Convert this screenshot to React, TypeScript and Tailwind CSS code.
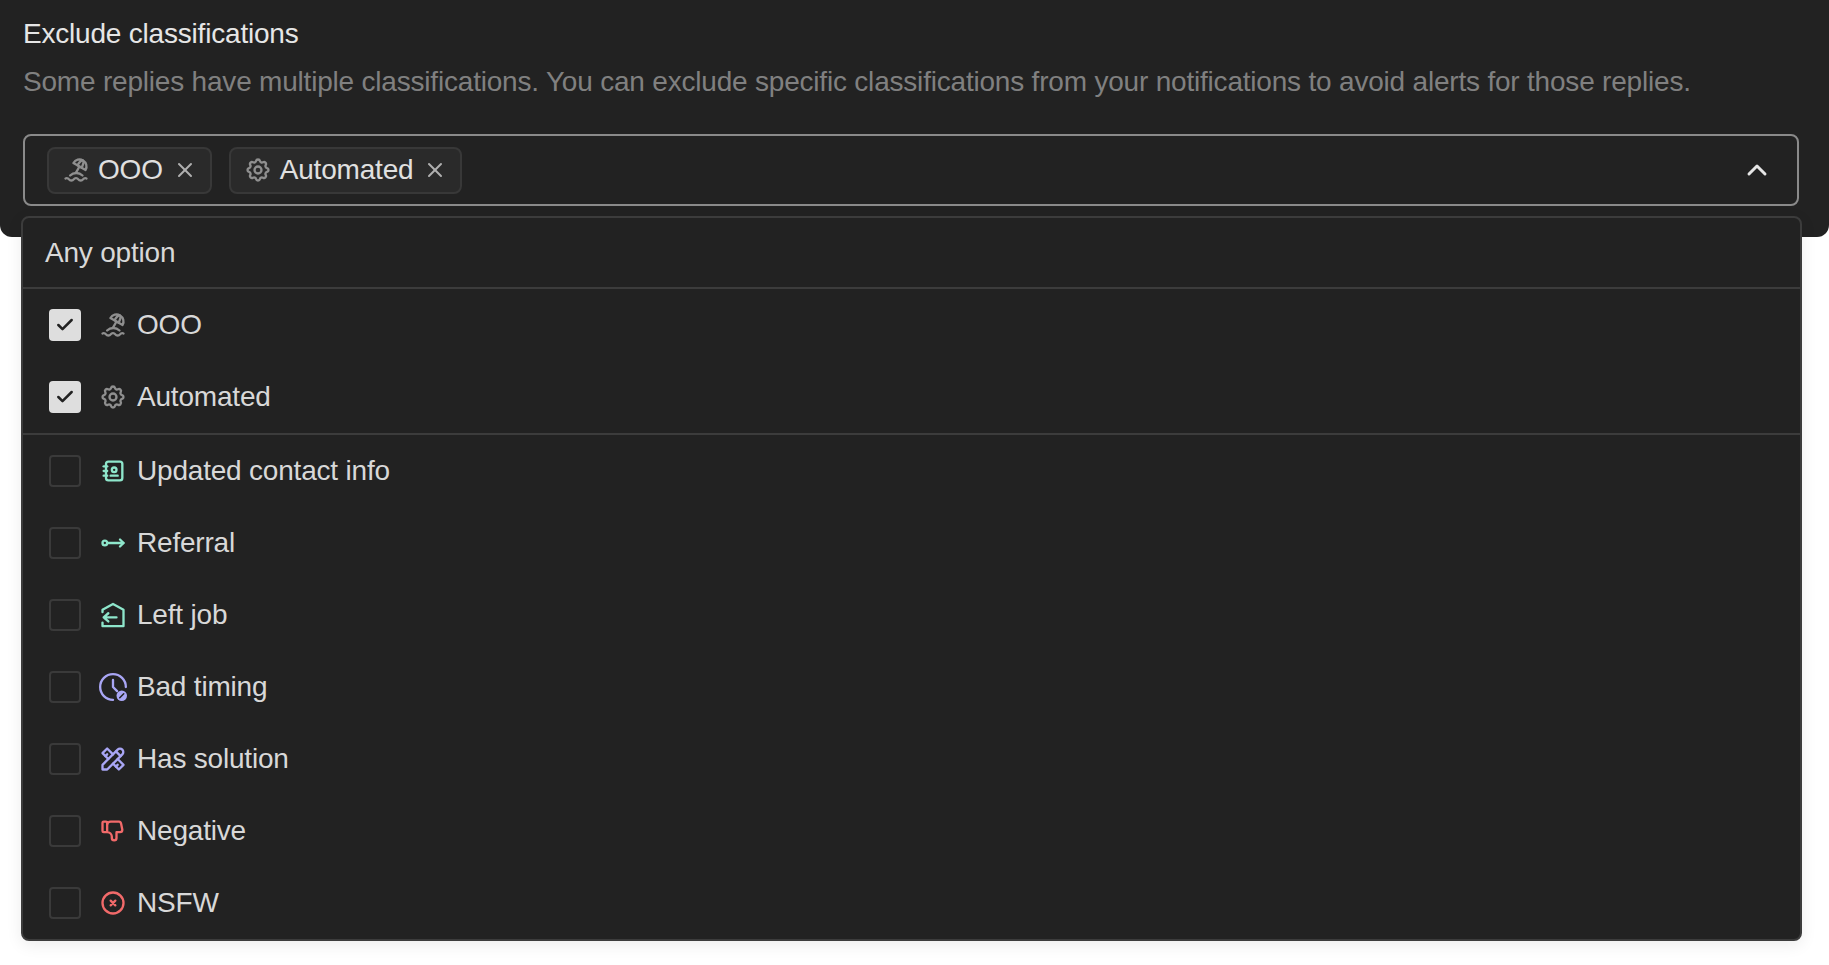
import { ChevronUp, X, Check } from 'lucide-react';
import { TbBeach, TbSettings, TbAddressBook, TbArrowRightCircle, TbTools, TbThumbDown, TbCircleX } from 'react-icons/tb';
import type { ReactNode } from 'react';

function LeftJobIcon() {
  return (
    <svg viewBox="0 0 24 24" className="w-7 h-7" fill="none" stroke="currentColor" strokeWidth="2" strokeLinecap="round" strokeLinejoin="round">
      <path d="M3 9.5V7.5L12 2.5L21 7.5V21.5H3V18.5" />
      <path d="M15 14H4M4 14L8 10.5M4 14L8 17.5" />
    </svg>
  );
}

function BadTimingIcon() {
  return (
    <svg viewBox="0 0 24 24" className="w-7 h-7" fill="none" stroke="currentColor" strokeWidth="2" strokeLinecap="round" strokeLinejoin="round">
      <path d="M12 23A11 11 0 1 1 23 12" />
      <path d="M12 6V12L15.5 15.5" />
      <circle cx="19.5" cy="19.5" r="4.5" fill="currentColor" stroke="none" />
      <path d="M17.8 21.2L21.2 17.8" stroke="#222222" strokeWidth="1.3" />
    </svg>
  );
}

const options: { label: string; icon: ReactNode; color: string; checked?: boolean }[] = [
  { label: 'OOO', icon: <TbBeach className="w-7 h-7" />, color: 'text-[#8f8f8f]', checked: true },
  { label: 'Automated', icon: <TbSettings className="w-7 h-7" />, color: 'text-[#8f8f8f]', checked: true },
  { label: 'Updated contact info', icon: <TbAddressBook className="w-7 h-7" />, color: 'text-[#8ee6cb]' },
  { label: 'Referral', icon: <TbArrowRightCircle className="w-7 h-7" />, color: 'text-[#8ee6cb]' },
  { label: 'Left job', icon: <LeftJobIcon />, color: 'text-[#8ee6cb]' },
  { label: 'Bad timing', icon: <BadTimingIcon />, color: 'text-[#a9a6f5]' },
  { label: 'Has solution', icon: <TbTools className="w-7 h-7" />, color: 'text-[#a9a6f5]' },
  { label: 'Negative', icon: <TbThumbDown className="w-7 h-7" />, color: 'text-[#f26a6a]' },
  { label: 'NSFW', icon: <TbCircleX className="w-7 h-7" />, color: 'text-[#f26a6a]' },
];

function Chip({ icon, label }: { icon: ReactNode; label: string }) {
  return (
    <div className="flex items-center h-[47px] pl-[13px] pr-[13px] gap-2 rounded-lg border-2 border-[#383838] bg-[#2a2a2a] text-[28px] tracking-[-0.2px] text-[#e0e0e0]">
      <span className="text-[#8f8f8f]">{icon}</span>
      <span>{label}</span>
      <X className="w-6 h-6 ml-0.5 text-[#b0b0b0]" strokeWidth={2} />
    </div>
  );
}

function Row({ label, icon, color, checked }: (typeof options)[number]) {
  return (
    <div className="flex items-center h-[72px] pl-[26px]">
      {checked ? (
        <div className="flex items-center justify-center w-8 h-8 rounded bg-[#dedede]">
          <Check className="w-5 h-5 text-[#222222]" strokeWidth={3} />
        </div>
      ) : (
        <div className="w-8 h-8 rounded border-2 border-[#3a3a3a]" />
      )}
      <span className={`ml-[18px] ${color}`}>{icon}</span>
      <span className="ml-[10px] text-[28px] tracking-[-0.2px] text-[#d8d8d8]">{label}</span>
    </div>
  );
}

export default function App() {
  return (
    <div className="relative min-h-screen bg-white font-['Liberation_Sans',sans-serif]">
      <div className="h-[237px] bg-[#222222] rounded-b-xl px-[23px] pt-4">
        <h3 className="text-[28px] leading-9 tracking-[-0.2px] text-[#e6e6e6]">Exclude classifications</h3>
        <p className="mt-3 text-[28px] leading-9 tracking-[-0.2px] text-[#808080] whitespace-nowrap">
          Some replies have multiple classifications. You can exclude specific classifications from your notifications to avoid alerts for those replies.
        </p>
        <div className="flex items-center justify-between mt-[34px] w-[1776px] h-[72px] pl-[22px] pr-[24px] rounded-lg border-2 border-[#8a8a8a]">
          <div className="flex items-center gap-[17px]">
            <Chip icon={<TbBeach className="w-7 h-7" />} label="OOO" />
            <Chip icon={<TbSettings className="w-7 h-7" />} label="Automated" />
          </div>
          <ChevronUp className="w-8 h-8 text-[#e6e6e6]" strokeWidth={2.2} />
        </div>
      </div>

      {/* Dropdown sits over the panel */}
      <div className="absolute top-[216px] left-[21px] w-[1781px] rounded-lg border-2 border-[#3c3c3c] bg-[#222222] shadow-[0_4px_16px_rgba(0,0,0,0.08)]">
        <div className="flex items-center h-[71px] pl-[22px] text-[28px] tracking-[-0.2px] text-[#d8d8d8] border-b-2 border-[#3c3c3c]">Any option</div>
        <div className="border-b-2 border-[#3c3c3c]">
          {options.slice(0, 2).map((o) => (
            <Row key={o.label} {...o} />
          ))}
        </div>
        {options.slice(2).map((o) => (
          <Row key={o.label} {...o} />
        ))}
      </div>
    </div>
  );
}
